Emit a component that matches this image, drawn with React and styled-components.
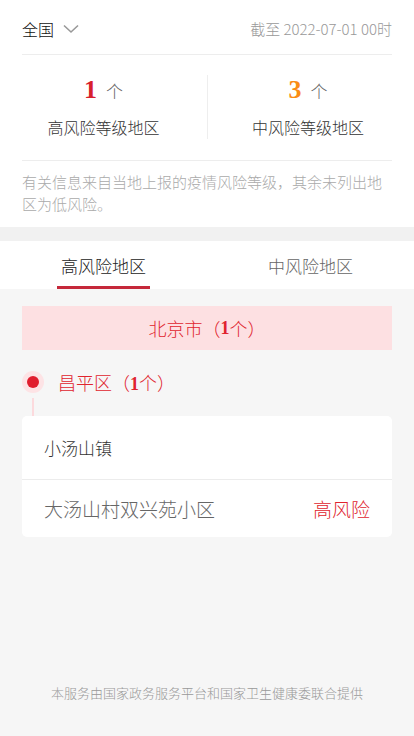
import styled, { createGlobalStyle } from "styled-components";

const GlobalStyle = createGlobalStyle`
  html, body {
    margin: 0;
    padding: 0;
    background: #f6f6f6;
    font-family: "Noto Sans CJK SC", "Noto Sans", sans-serif;
    font-weight: 300;
  }
  * { box-sizing: border-box; }
`;

const Page = styled.div`
  width: 414px;
  min-height: 736px;
  background: #f6f6f6;
  display: flex;
  flex-direction: column;
`;

const Summary = styled.section`
  background: #fff;
  padding: 0 22px;
`;

const TopBar = styled.div`
  height: 55px;
  display: flex;
  align-items: center;
  justify-content: space-between;
  border-bottom: 1px solid #ededed;
  padding-top: 3px;
`;

const AreaPicker = styled.div`
  display: flex;
  align-items: center;
  gap: 9px;
  font-size: 16px;
  color: #111;
`;

const UpdateTime = styled.div`
  font-size: 15px;
  color: #999;
`;

const StatsBlock = styled.div`
  padding: 20px 0 21px;
  border-bottom: 1px solid #ededed;
`;

/* the two cells split the full page width, not the padded box */
const Stats = styled.div`
  display: grid;
  grid-template-columns: 207px 1fr;
  margin: 0 -22px 0 -22px;
  padding-right: 6px;
`;

const StatCell = styled.div`
  display: flex;
  flex-direction: column;
  align-items: center;
  gap: 11px;
  border-left: ${(p) => (p.divided ? "1px solid #eee" : "none")};
`;

const Count = styled.div`
  display: flex;
  align-items: baseline;
  gap: 9px;
  height: 30px;
`;

const Number = styled.span`
  font-family: "Liberation Serif", serif;
  font-weight: bold;
  font-size: 26px;
  color: ${(p) => p.color};
`;

const Unit = styled.span`
  font-size: 17px;
  color: #666;
`;

const StatLabel = styled.div`
  font-size: 16px;
  line-height: 23px;
  color: #333;
`;

const Note = styled.p`
  margin: 0;
  padding: 10px 0 12px;
  font-size: 15px;
  line-height: 22px;
  color: #aaa;
`;

const Gap = styled.div`
  height: 14px;
  background: #f1f1f1;
`;

const Tabs = styled.nav`
  background: #fff;
  height: 48px;
  display: grid;
  grid-template-columns: 1fr 1fr;
`;

const Tab = styled.div`
  position: relative;
  display: flex;
  align-items: center;
  justify-content: center;
  font-size: 17px;
  color: ${(p) => (p.active ? "#222" : "#666")};

  &::after {
    content: "";
    display: ${(p) => (p.active ? "block" : "none")};
    position: absolute;
    left: 57px;
    width: 93px;
    bottom: 0;
    height: 3px;
    background: #c5283a;
  }
`;

const List = styled.div`
  padding: 17px 22px 0;
  flex: 1;
`;

const CityBanner = styled.div`
  height: 44px;
  background: #fde0e2;
  display: flex;
  align-items: center;
  justify-content: center;
  font-size: 18px;
  color: #e0242e;
`;

const Bold = styled.b`
  font-family: "Liberation Serif", serif;
  font-weight: bold;
  font-size: 18px;
`;

const District = styled.div`
  display: flex;
  align-items: center;
  gap: 14px;
  height: 32px;
  margin-top: 16px;
  font-size: 18px;
  color: #e0242e;
`;

const Dot = styled.span`
  width: 22px;
  height: 22px;
  border-radius: 50%;
  background: #fde3e5;
  display: flex;
  align-items: center;
  justify-content: center;

  &::before {
    content: "";
    width: 12px;
    height: 12px;
    border-radius: 50%;
    background: #e01e2e;
  }
`;

const Stem = styled.div`
  margin-left: 10px;
  width: 2px;
  height: 18px;
  background: #fcdadd;
`;

const Card = styled.div`
  background: #fff;
  border-radius: 5px;
`;

const Row = styled.div`
  height: ${(p) => (p.short ? "58px" : "63px")};
  padding: 0 22px;
  display: flex;
  align-items: center;
  justify-content: space-between;
  border-top: ${(p) => (p.divided ? "1px solid #ececec" : "none")};
`;

const Town = styled.span`
  font-size: 17px;
  color: #333;
`;

const Place = styled.span`
  font-size: 19px;
  color: #666;
`;

const Level = styled.span`
  font-size: 19px;
  color: #e0242e;
`;

const Footer = styled.footer`
  text-align: center;
  font-size: 13px;
  color: #999;
  padding: 0 0 34px;
`;

const Chevron = () => (
  <svg width="16" height="10" viewBox="0 0 16 10">
    <path d="M1 1.5 L8 8 L15 1.5" fill="none" stroke="#999" strokeWidth="1.6" />
  </svg>
);

export default function App() {
  return (
    <Page>
      <GlobalStyle />
      <Summary>
        <TopBar>
          <AreaPicker>
            全国 <Chevron />
          </AreaPicker>
          <UpdateTime>截至 2022-07-01 00时</UpdateTime>
        </TopBar>
        <StatsBlock>
          <Stats>
            <StatCell>
              <Count>
                <Number color="#d8202c">1</Number>
                <Unit>个</Unit>
              </Count>
              <StatLabel>高风险等级地区</StatLabel>
            </StatCell>
            <StatCell divided>
              <Count>
                <Number color="#fa8c16">3</Number>
                <Unit>个</Unit>
              </Count>
              <StatLabel>中风险等级地区</StatLabel>
            </StatCell>
          </Stats>
        </StatsBlock>
        <Note>有关信息来自当地上报的疫情风险等级，其余未列出地区为低风险。</Note>
      </Summary>
      <Gap />
      <Tabs>
        <Tab active>高风险地区</Tab>
        <Tab>中风险地区</Tab>
      </Tabs>
      <List>
        <CityBanner>
          北京市（<Bold>1</Bold>个）
        </CityBanner>
        <District>
          <Dot />
          <span>
            昌平区（<Bold>1</Bold>个）
          </span>
        </District>
        <Stem />
        <Card>
          <Row>
            <Town>小汤山镇</Town>
          </Row>
          <Row divided short>
            <Place>大汤山村双兴苑小区</Place>
            <Level>高风险</Level>
          </Row>
        </Card>
      </List>
      <Footer>本服务由国家政务服务平台和国家卫生健康委联合提供</Footer>
    </Page>
  );
}
